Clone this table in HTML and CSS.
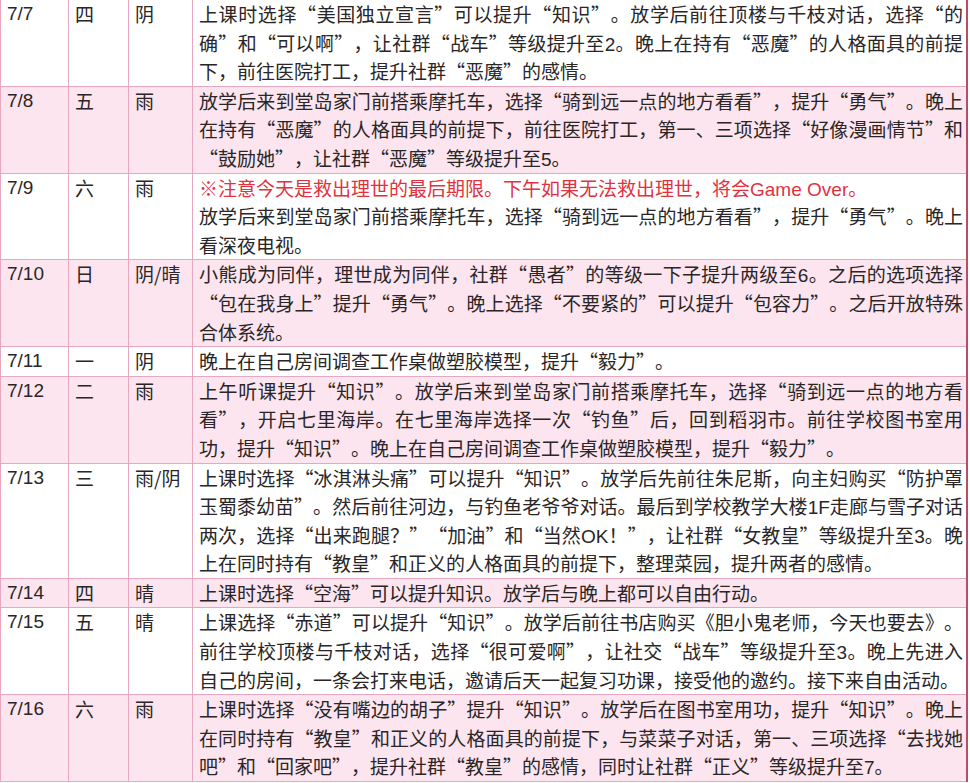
FILE: index.html
```html
<!DOCTYPE html>
<html lang="zh-CN">
<head>
<meta charset="utf-8">
<title>日程表</title>
<link rel="stylesheet" href="styles.css">
</head>
<body>
<table class="schedule">
  <colgroup>
    <col class="c-date">
    <col class="c-day">
    <col class="c-weather">
    <col class="c-text">
  </colgroup>
  <tbody>
    <tr>
      <td class="date">7/7</td><td class="day">四</td><td class="weather">阴</td>
      <td class="desc">上课时选择“美国独立宣言”可以提升“知识”。放学后前往顶楼与千枝对话，选择“的确”和“可以啊”，让社群“战车”等级提升至<span class="en">2</span>。晚上在持有“恶魔”的人格面具的前提下，前往医院打工，提升社群“恶魔”的感情。</td>
    </tr>
    <tr class="alt">
      <td class="date">7/8</td><td class="day">五</td><td class="weather">雨</td>
      <td class="desc">放学后来到堂岛家门前搭乘摩托车，选择“骑到远一点的地方看看”，提升“勇气”。晚上在持有“恶魔”的人格面具的前提下，前往医院打工，第一、三项选择“好像漫画情节”和“鼓励她”，让社群“恶魔”等级提升至<span class="en">5</span>。</td>
    </tr>
    <tr>
      <td class="date">7/9</td><td class="day">六</td><td class="weather">雨</td>
      <td class="desc"><p class="warn">※注意今天是救出理世的最后期限。下午如果无法救出理世，将会<span class="en">Game Over</span>。</p>放学后来到堂岛家门前搭乘摩托车，选择“骑到远一点的地方看看”，提升“勇气”。晚上看深夜电视。</td>
    </tr>
    <tr class="alt">
      <td class="date">7/10</td><td class="day">日</td><td class="weather">阴/晴</td>
      <td class="desc">小熊成为同伴，理世成为同伴，社群“愚者”的等级一下子提升两级至<span class="en">6</span>。之后的选项选择“包在我身上”提升“勇气”。晚上选择“不要紧的”可以提升“包容力”。之后开放特殊合体系统。</td>
    </tr>
    <tr>
      <td class="date">7/11</td><td class="day">一</td><td class="weather">阴</td>
      <td class="desc">晚上在自己房间调查工作桌做塑胶模型，提升“毅力”。</td>
    </tr>
    <tr class="alt">
      <td class="date">7/12</td><td class="day">二</td><td class="weather">雨</td>
      <td class="desc">上午听课提升“知识”。放学后来到堂岛家门前搭乘摩托车，选择“骑到远一点的地方看看”，开启七里海岸。在七里海岸选择一次“钓鱼”后，回到稻羽市。前往学校图书室用功，提升“知识”。晚上在自己房间调查工作桌做塑胶模型，提升“毅力”。</td>
    </tr>
    <tr>
      <td class="date">7/13</td><td class="day">三</td><td class="weather">雨/阴</td>
      <td class="desc">上课时选择“冰淇淋头痛”可以提升“知识”。放学后先前往朱尼斯，向主妇购买“防护罩玉蜀黍幼苗”。然后前往河边，与钓鱼老爷爷对话。最后到学校教学大楼<span class="en">1F</span>走廊与雪子对话两次，选择“出来跑腿？”“加油”和“当然<span class="en">OK</span>！”，让社群“女教皇”等级提升至<span class="en">3</span>。晚上在同时持有“教皇”和正义的人格面具的前提下，整理菜园，提升两者的感情。</td>
    </tr>
    <tr class="alt">
      <td class="date">7/14</td><td class="day">四</td><td class="weather">晴</td>
      <td class="desc">上课时选择“空海”可以提升知识。放学后与晚上都可以自由行动。</td>
    </tr>
    <tr>
      <td class="date">7/15</td><td class="day">五</td><td class="weather">晴</td>
      <td class="desc">上课选择“赤道”可以提升“知识”。放学后前往书店购买《胆小鬼老师，今天也要去》。前往学校顶楼与千枝对话，选择“很可爱啊”，让社交“战车”等级提升至<span class="en">3</span>。晚上先进入自己的房间，一条会打来电话，邀请后天一起复习功课，接受他的邀约。接下来自由活动。</td>
    </tr>
    <tr class="alt">
      <td class="date">7/16</td><td class="day">六</td><td class="weather">雨</td>
      <td class="desc">上课时选择“没有嘴边的胡子”提升“知识”。放学后在图书室用功，提升“知识”。晚上在同时持有“教皇”和正义的人格面具的前提下，与菜菜子对话，第一、三项选择“去找她吧”和“回家吧”，提升社群“教皇”的感情，同时让社群“正义”等级提升至<span class="en">7</span>。</td>
    </tr>
  </tbody>
</table>
</body>
</html>
```

FILE: styles.css
```css
html, body {
  margin: 0;
  padding: 0;
  background: #ffffff;
}

.schedule {
  border-collapse: collapse;
  table-layout: fixed;
  width: 968px;
  font-family: "Noto Sans CJK SC", "Liberation Sans", sans-serif;
  font-size: 19px;
  line-height: 28.6px;
  color: #2a2627;
  border-right: 2px solid #b94d66;
}

.c-date { width: 68px; }
.c-day { width: 60px; }
.c-weather { width: 64px; }
.c-text { width: auto; }

.schedule td {
  vertical-align: top;
  padding: 0 5px 0 6px;
  border-left: 1px solid #e8a7c1;
  border-bottom: 1px solid #e8a7c1;
}

.schedule td.desc {
  padding-right: 3px;
}

.schedule tr.alt td {
  background: #fce5ee;
}

.date,
.en {
  font-family: "Liberation Sans", "Noto Sans CJK SC", sans-serif;
  font-variant-east-asian: normal;
}

.en {
  line-height: 1;
}

.desc {
  text-align: justify;
  font-variant-east-asian: full-width;
  text-spacing-trim: space-all;
}

.warn {
  margin: 0;
  color: #e2323f;
}
```
